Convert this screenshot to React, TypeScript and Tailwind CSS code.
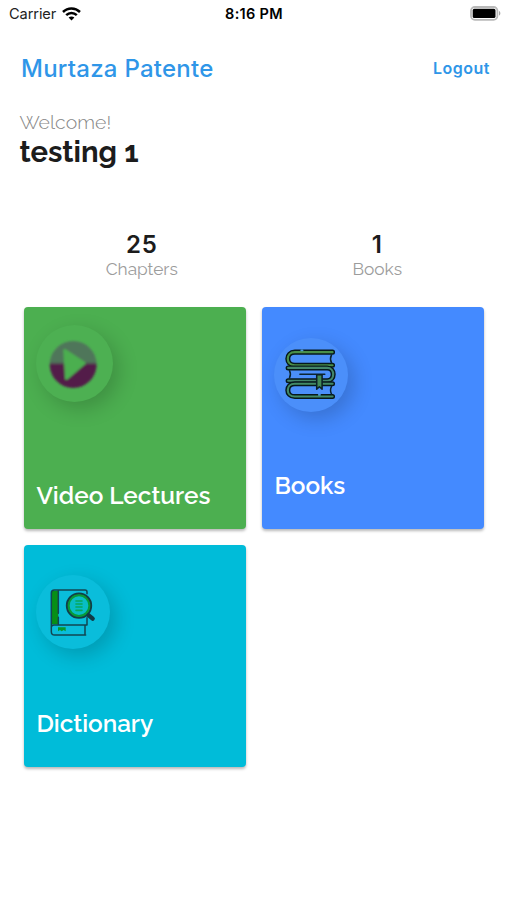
import type { ReactNode } from "react";

const raleway = "font-['Raleway','Lato',sans-serif]";

interface StatProps {
  value: string;
  label: string;
}

interface MenuCardProps {
  title: string;
  cardClass: string;
  circleClass: string;
  icon: ReactNode;
}

function StatusBar() {
  return (
    <div className="grid h-[27px] grid-cols-3 items-center pr-[6px] pl-[9px] text-black">
      <div className="flex items-center gap-[6px]">
        <span className="pt-[2px] text-[14.6px] leading-none tracking-[-0.1px] whitespace-nowrap text-[#222]">Carrier</span>
        <svg width="19" height="14" viewBox="0 0 19 14" fill="none" stroke="#000" strokeWidth="2.5">
          <path d="M1 5 C5.8 0.3 13.2 0.3 18 5" />
          <path d="M4.2 8.2 C7.2 5.3 11.8 5.3 14.8 8.2" />
          <path d="M6.6 10.6 C8.3 9.1 10.7 9.1 12.4 10.6 L9.5 13.6 Z" fill="#000" stroke="none" />
        </svg>
      </div>
      <span className="pt-[2px] pr-[2px] text-center text-[14.5px] leading-none font-semibold tracking-[0.3px] whitespace-nowrap">
        8:16 PM
      </span>
      <svg className="justify-self-end" width="31" height="15" viewBox="0 0 31 15">
        <rect x="1" y="1" width="26.4" height="12.8" rx="3.8" fill="#fff" stroke="#b9b9b9" strokeWidth="1.8" />
        <rect x="2.7" y="2.8" width="22.8" height="9.2" rx="1.6" fill="#000" />
        <path d="M29 5 C30.8 5.7 30.8 8.9 29 9.6 Z" fill="#a6a6a6" />
      </svg>
    </div>
  );
}

function Stat({ value, label }: StatProps) {
  return (
    <div className="flex flex-1 flex-col items-center">
      <span className="text-[24px] leading-[28px] font-semibold tracking-[0.8px] text-[#1c1c1c]">{value}</span>
      <span className={`${raleway} text-[17.3px] leading-[20px] font-[450] text-[#9c9c9c]`}>{label}</span>
    </div>
  );
}

function PlayIcon() {
  return (
    <svg viewBox="62 76 230 230" className="h-full w-full">
      <defs>
        <linearGradient id="disc" x1="0" y1="0" x2="0" y2="1">
          <stop offset="0.45" stopColor="#50765a" />
          <stop offset="0.51" stopColor="#521f49" />
        </linearGradient>
        <filter id="soft">
          <feGaussianBlur stdDeviation="2.5" />
        </filter>
      </defs>
      <g filter="url(#soft)">
        <circle cx="173" cy="194" r="70" fill="url(#disc)" />
        <path d="M148 152 L206 190 L153 235 Z" fill="#4caf50" stroke="#4caf50" strokeWidth="9" strokeLinejoin="round" />
      </g>
    </svg>
  );
}

function BooksIcon() {
  return (
    <svg viewBox="60 114 220 220" className="h-full w-full" fill="none" strokeLinecap="round" strokeLinejoin="round">
      {/* top book */}
      <path d="M234 156 H122 C94 156 94 195 122 195 H234" stroke="#07191c" strokeWidth="15" />
      <path d="M234 156 H122 C94 156 94 195 122 195 H234" stroke="#4a8f4a" strokeWidth="6.5" />
      <path d="M231 164 Q225 176 231 188" stroke="#0b2530" strokeWidth="4.5" />
      {/* middle book */}
      <path d="M102 203 H218 C242 203 242 241 218 241 H102" stroke="#07191c" strokeWidth="15" />
      <path d="M102 203 H218 C242 203 242 241 218 241 H102" stroke="#43866b" strokeWidth="6.5" />
      <path d="M106 211 Q112 222 106 233 M137 222 H211" stroke="#0b2530" strokeWidth="4.5" />
      {/* bottom book */}
      <path d="M234 250 H122 C94 250 94 288 122 288 H234" stroke="#07191c" strokeWidth="15" />
      <path d="M234 250 H122 C94 250 94 288 122 288 H234" stroke="#428a67" strokeWidth="6.5" />
      <path d="M231 258 Q225 270 231 281" stroke="#0b2530" strokeWidth="4.5" />
      {/* bookmark */}
      <path d="M187 223 H203 V266 L195 259 L187 266 Z" fill="#438a58" stroke="#0b2028" strokeWidth="4.5" />
      <path d="M141 151 H145 M193 283 H197" stroke="#4e9bd0" strokeWidth="5" />
    </svg>
  );
}

function DictionaryIcon() {
  return (
    <svg viewBox="64 104 222 222" className="h-full w-full" fill="none" strokeLinecap="round" strokeLinejoin="round">
      <path d="M113 151 H131 V252 H111 V155 Z" fill="#078f16" />
      <path
        d="M217 160 V155 Q217 149 211 149 H119 Q110 149 110 158 V274 Q110 284 120 284 H213 M217 232 V254 H118 Q110 254 110 261 M131 151 V219 M131 231 V252 M211 256 V282"
        stroke="#124653"
        strokeWidth="4.5"
      />
      <path d="M130 261 H153 V273 L147 269 L141 273 L136 269 L130 273 Z" fill="#07992d" />
      <circle cx="193" cy="196" r="36" fill="#08bdc4" stroke="#123f48" strokeWidth="7" />
      <circle cx="193" cy="196" r="31" stroke="#079a38" strokeWidth="6" />
      <path d="M184 182 H202 M184 191 H202 M184 200 H202 M184 210 H202" stroke="#08a65c" strokeWidth="5" />
      <path d="M222 225 L234 235" stroke="#123945" strokeWidth="13" />
    </svg>
  );
}

function MenuCard({ title, cardClass, circleClass, icon }: MenuCardProps) {
  return (
    <div
      className={`flex h-[222px] flex-col items-start justify-between rounded-[4px] pl-3 shadow-[0_2px_3px_rgba(0,0,0,0.28)] ${cardClass}`}
    >
      <div className={`rounded-full shadow-[6px_7px_20px_rgba(0,0,0,0.18)] ${circleClass}`}>{icon}</div>
      <span className={`${raleway} pl-[0.4px] text-[24.3px] leading-[30px] font-semibold whitespace-nowrap text-white`}>
        {title}
      </span>
    </div>
  );
}

export default function App() {
  return (
    <div className="h-[900px] w-[507px] overflow-hidden bg-white font-['Inter',sans-serif]">
      <StatusBar />

      <header className="flex h-[82px] items-center justify-between pr-[17px] pl-[21px] text-[#2f96e8]">
        <h1 className="pt-[2px] text-[24px] leading-none font-[450] tracking-[0.25px]">Murtaza Patente</h1>
        <button className="text-[16px] leading-none font-semibold tracking-[0.5px]">Logout</button>
      </header>

      <section className={`${raleway} flex h-[122px] flex-col pt-[2px] pl-[19.5px]`}>
        <span className="text-[19.4px] leading-[23px] font-light tracking-[0.1px] text-[#858585]">Welcome!</span>
        <span className="text-[29.2px] leading-[37px] font-bold text-[#1c1c1c]">testing 1</span>
      </section>

      <section className="flex h-[76px] pr-3 pl-6">
        <Stat value="25" label="Chapters" />
        <Stat value="1" label="Books" />
      </section>

      <main className="grid grid-cols-[222px_222px] gap-4 pl-6">
        <MenuCard
          title="Video Lectures"
          cardClass="bg-[#4caf50] pt-[18px] pb-[18px]"
          circleClass="size-[77px] bg-[#4db052]"
          icon={<PlayIcon />}
        />
        <MenuCard
          title="Books"
          cardClass="bg-[#448aff] pt-[31px] pb-[28px]"
          circleClass="size-[74px] bg-[#4b8ffa]"
          icon={<BooksIcon />}
        />
        <MenuCard
          title="Dictionary"
          cardClass="bg-[#00bcd9] pt-[30px] pb-[28px]"
          circleClass="size-[74px] bg-[#0abddb]"
          icon={<DictionaryIcon />}
        />
      </main>
    </div>
  );
}
